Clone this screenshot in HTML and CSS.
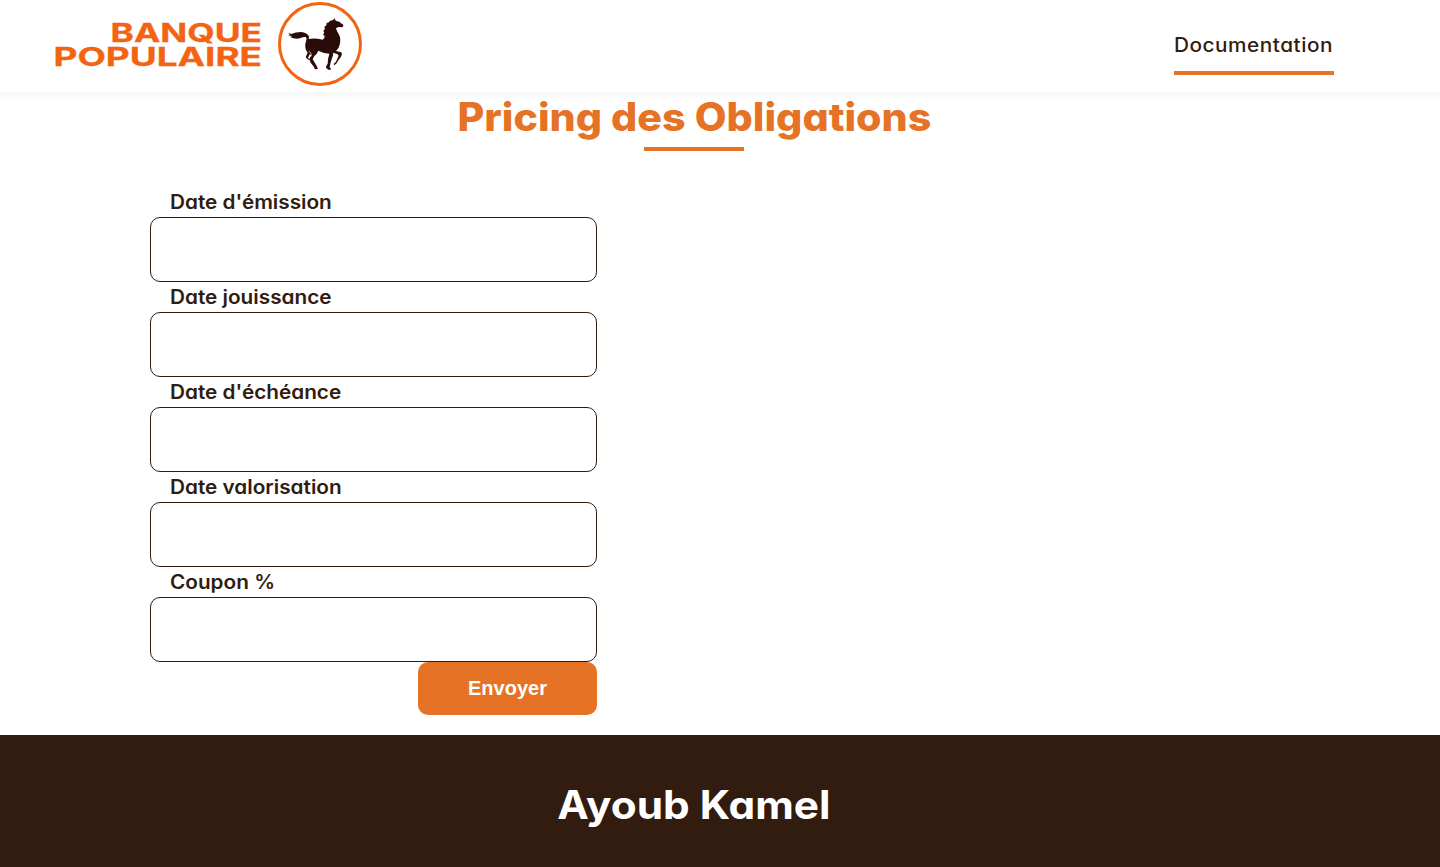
FILE: index.html
```html
<!DOCTYPE html>
<html lang="fr">
<head>
<meta charset="utf-8">
<title>Pricing des Obligations</title>
<link rel="stylesheet" href="styles.css">
</head>
<body>
<header class="header">
  <svg class="logo" viewBox="0 0 320 92" role="img" aria-label="Banque Populaire">
    <g class="logo-text">
      <text x="60.5" y="41.7" textLength="151.5" lengthAdjust="spacingAndGlyphs">BANQUE</text>
      <text x="3.5" y="65.7" textLength="208.5" lengthAdjust="spacingAndGlyphs">POPULAIRE</text>
    </g>
    <g transform="translate(220 0) scale(.33333)">
      <circle class="logo-ring" cx="150" cy="132" r="121.5"/>
      <path class="horse" d="M54 98L64 102Q76 96 94 96Q110 98 115 106Q119 112 116 117Q134 113 158 119Q165 115 164 107L159 104L163 98L160 92L165 87L163 81L169 76L170 69L177 67L180 62L188 61L194 55L197 62L208 65L213 70L220 74Q221 80 216 82L207 81L198 84Q199 91 206 102Q214 117 209 134Q207 145 198 153L214 157Q218 162 213 170L203 184L200 190L193 196L191 192L198 185L206 167L202 162L188 158L190 163L185 178L181 191L179 202L184 208L177 210L169 205L168 200L173 191L174 178L178 161Q162 161 145 152Q142 161 133 168L128 178L139 196L144 207L135 208L132 201L122 188L118 177L124 165L119 163L114 173L120 180L115 179L107 172L113 158Q104 146 106 131L109 120Q112 115 107 111Q99 110 92 114Q76 119 60 111L67 109L54 106L60 104Z"/>
      <path class="horse-line" d="M116 153Q126 158 124 169"/>
    </g>
  </svg>
  <nav class="nav"><a class="nav-link"><span class="wide">Documentation</span></a></nav>
</header>
<main class="main">
  <h1 class="title"><span class="wide">Pricing des Obligations</span></h1>
  <form class="form">
    <label class="label" for="emission"><span class="wide">Date d'émission</span></label>
    <input class="field" id="emission" type="text">
    <label class="label" for="jouissance"><span class="wide">Date jouissance</span></label>
    <input class="field" id="jouissance" type="text">
    <label class="label" for="echeance"><span class="wide">Date d'échéance</span></label>
    <input class="field" id="echeance" type="text">
    <label class="label" for="valorisation"><span class="wide">Date valorisation</span></label>
    <input class="field" id="valorisation" type="text">
    <label class="label" for="coupon"><span class="wide">Coupon %</span></label>
    <input class="field" id="coupon" type="text">
    <button class="submit" type="button">Envoyer</button>
  </form>
</main>
<footer class="footer"><h2 class="author"><span class="wide">Ayoub Kamel</span></h2></footer>
</body>
</html>
```

FILE: styles.css
```css
* {
  box-sizing: border-box;
  margin: 0;
  padding: 0;
}

body {
  min-height: 867px;
  display: flex;
  flex-direction: column;
  overflow: hidden;
  background: #fff;
  color: #311c0f;
  font-family: Inter, "Open Sans", sans-serif;
  font-feature-settings: "cv11";
}

.wide {
  display: inline-block;
  transform: scaleX(1.07);
  transform-origin: left center;
}

.header {
  height: 92px;
  display: flex;
  justify-content: space-between;
  padding: 0 106px 0 50px;
  box-shadow: 0 0 10px 2px rgba(0, 0, 0, .05);
}

.logo {
  width: 320px;
  height: 92px;
}

.logo-text {
  fill: #f26411;
  stroke: #f26411;
  stroke-width: .3;
  font: 700 25.8px Inter, sans-serif;
}

.logo-ring {
  fill: none;
  stroke: #f26411;
  stroke-width: 9;
}

.horse {
  fill: #2b0b08;
}

.horse-line {
  fill: none;
  stroke: #fff;
  stroke-width: 2;
}

.nav {
  padding-top: 30px;
}

.nav-link {
  display: block;
  width: 160px;
  height: 45px;
  border-bottom: 4px solid #e57225;
  white-space: nowrap;
  font-size: 19.4px;
  font-weight: 550;
  line-height: 30px;
  letter-spacing: .5px;
}

.main {
  height: 643px;
}

.title {
  width: 1388px;
  display: flex;
  flex-direction: column;
  align-items: center;
  color: #e57225;
  font-size: 39px;
  font-weight: 780;
  line-height: 49px;
  white-space: nowrap;
}

.title .wide {
  transform: scaleX(1.056);
  transform-origin: center;
}

.title::after {
  content: "";
  width: 100px;
  height: 4px;
  margin-top: 6px;
  background: #e57225;
}

.form {
  width: 447px;
  margin: 36px 0 0 150px;
  display: flex;
  flex-direction: column;
}

.label {
  height: 30px;
  padding-left: 20px;
  font-size: 19.4px;
  font-weight: 570;
  line-height: 30px;
}

.field {
  height: 65px;
  padding: 0 20px;
  border: 1px solid #311c0f;
  border-radius: 10px;
  background: #fff;
  outline: 0;
}

.submit {
  align-self: flex-end;
  width: 179px;
  height: 53px;
  border: 0;
  border-radius: 10px;
  background: #e57225;
  color: #fff;
  font: 700 20px "Liberation Sans", Arial, sans-serif;
}

.footer {
  height: 132px;
  padding-top: 40px;
  background: #311c0f;
}

.author {
  width: 1388px;
  text-align: center;
  color: #fff;
  font-size: 39px;
  font-weight: 650;
  line-height: 59px;
}

.author .wide {
  transform: scaleX(1.085);
  transform-origin: center;
}
```
